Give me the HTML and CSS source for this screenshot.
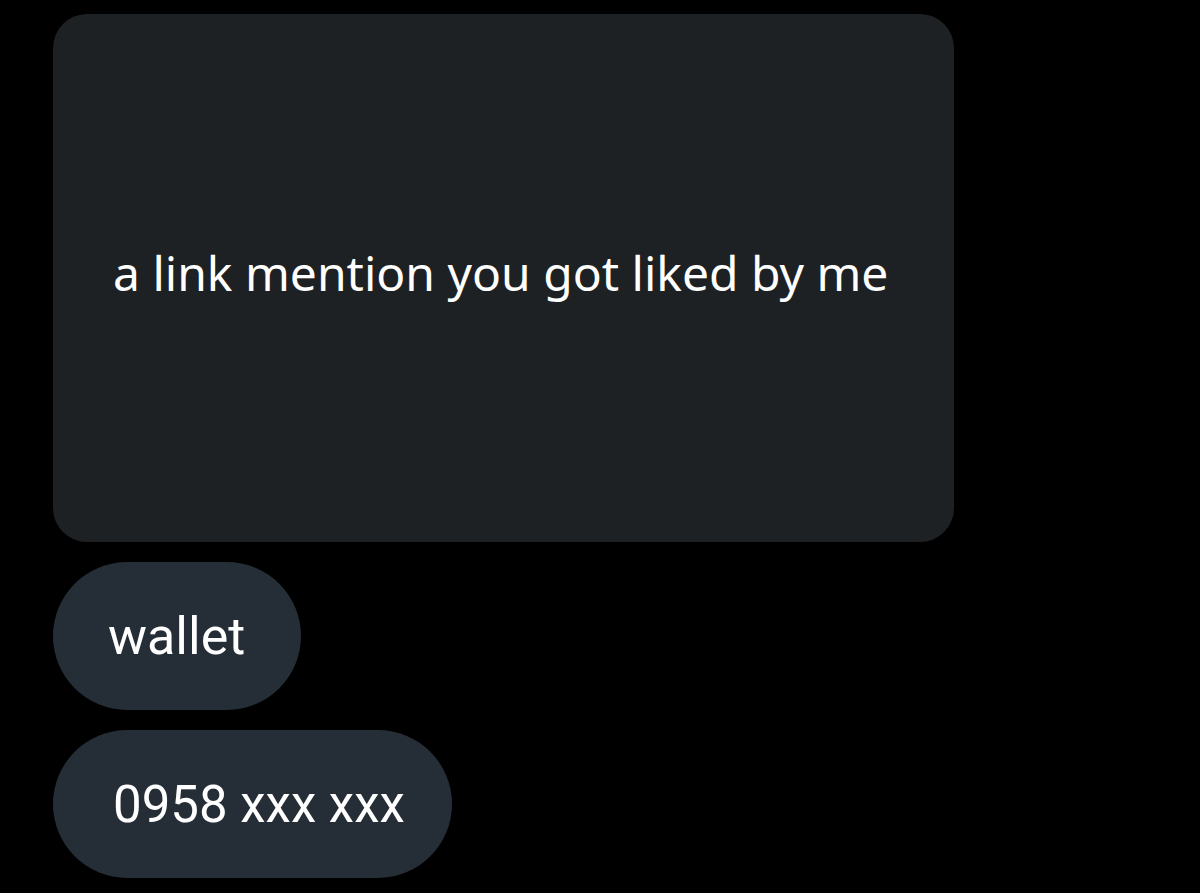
FILE: index.html
```html
<!DOCTYPE html>
<html lang="en">

<head>
    <meta charset="UTF-8">
    <meta name="viewport" content="width=device-width, initial-scale=1.0">
    <title>Chat</title>
    <link rel="stylesheet" href="styles.css">
</head>

<body>
    <div class="chat">
        <div class="card">
            <p class="card-text">a link mention you got liked by me</p>
        </div>
        <div class="pill pill-wallet">wallet</div>
        <div class="pill pill-phone">0958 xxx xxx</div>
    </div>
</body>

</html>
```

FILE: styles.css
```css
body {
    margin: 0;
    background: #000;
    color: #fff;
    font-family: Roboto, "Noto Sans", sans-serif;
}

.chat {
    display: flex;
    flex-direction: column;
    align-items: flex-start;
    gap: 20px;
    padding: 14px 0 0 53px;
}

.card {
    width: 901px;
    height: 528px;
    box-sizing: border-box;
    background-color: #1e2124;
    border-radius: 34px;
    display: flex;
    align-items: center;
    padding: 0 60px 12px;
}

.card-text {
    margin: 0;
    font-family: "Noto Sans", sans-serif;
    font-size: 48px;
}

.pill {
    height: 148px;
    box-sizing: border-box;
    display: flex;
    align-items: center;
    background-color: #252e36;
    border-radius: 74px;
    font-size: 52px;
}

.pill-wallet {
    padding: 0 56px 0 55px;
}

.pill-phone {
    padding: 0 47px 0 60px;
    font-size: 51px;
}
```
